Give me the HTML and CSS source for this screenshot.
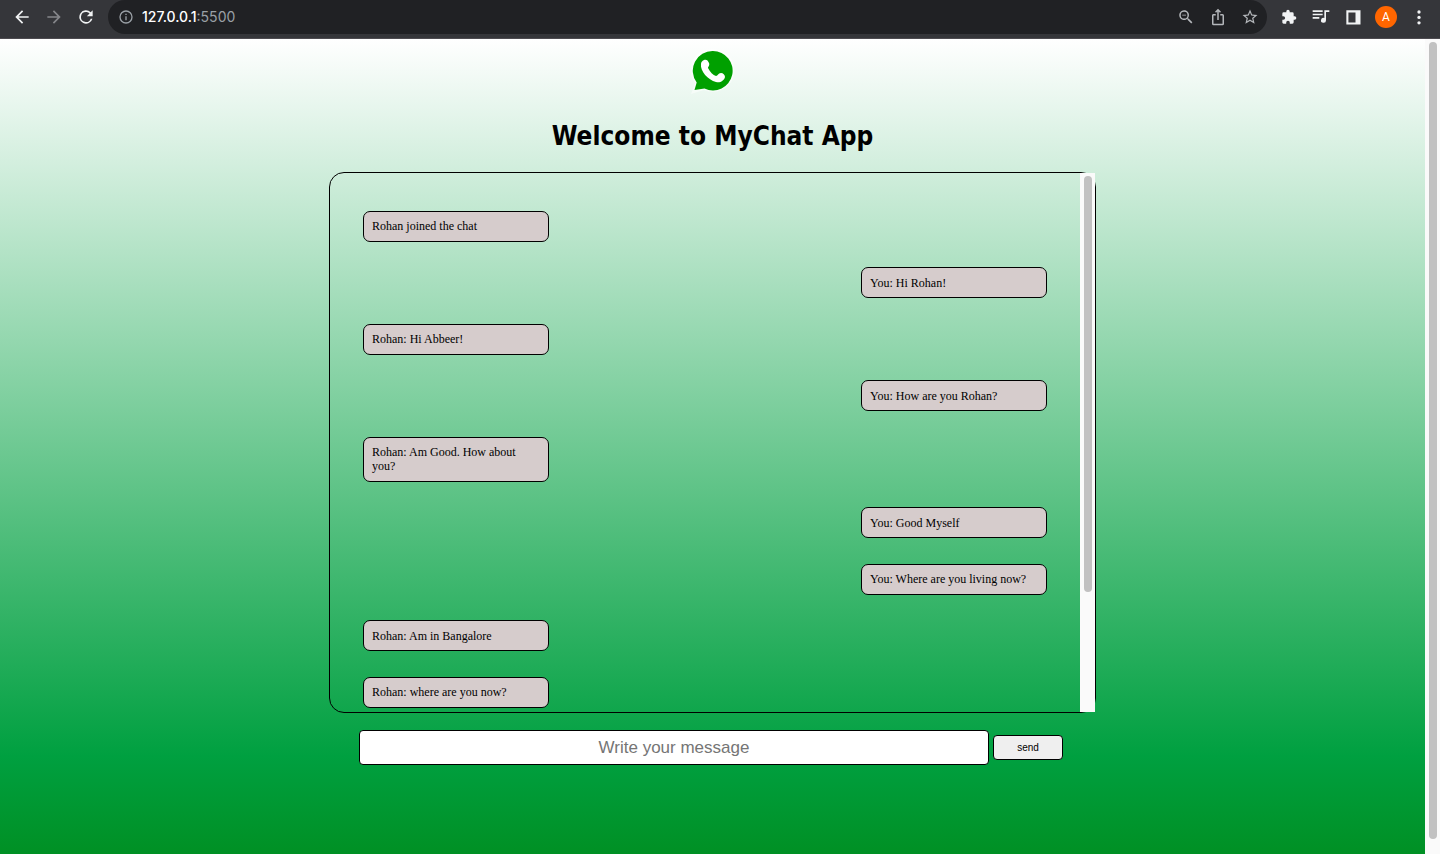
FILE: index.html
```html
<!DOCTYPE html>
<html lang="en">
<head>
<meta charset="utf-8">
<title>MyChat App</title>
<link rel="stylesheet" href="styles.css">
</head>
<body>
<header class="toolbar">
  <button class="tool" aria-label="Back"><svg viewBox="0 0 24 24"><path d="M20 11H7.8l5.6-5.6L12 4l-8 8 8 8 1.4-1.4L7.8 13H20z"/></svg></button>
  <button class="tool tool-off" aria-label="Forward"><svg viewBox="0 0 24 24"><path d="M4 13h12.2l-5.6 5.6L12 20l8-8-8-8-1.4 1.4 5.6 5.6H4z"/></svg></button>
  <button class="tool" aria-label="Reload"><svg viewBox="0 0 24 24"><path d="M17.65 6.35A8 8 0 1 0 19.73 14h-2.08A6 6 0 1 1 12 6c1.66 0 3.14.69 4.22 1.78L13 11h7V4z"/></svg></button>
  <div class="omnibox">
    <svg class="info" viewBox="0 0 24 24"><path d="M11 7h2v2h-2zm0 4h2v6h-2zm1-9a10 10 0 1 0 0 20 10 10 0 0 0 0-20m0 18a8 8 0 1 1 0-16 8 8 0 0 1 0 16"/></svg>
    <p class="address"><span class="host">127.0.0.1</span>:5500</p>
    <button class="mini" aria-label="Zoom"><svg viewBox="0 0 24 24"><path d="M15.5 14h-.8l-.3-.3A6.500 6.500 0 1 0 13.700 14.400l.3.3v.8l5 5 1.500-1.500zm-6 0a4.500 4.500 0 1 1 0-9 4.500 4.500 0 0 1 0 9M7 9h5v1H7z"/></svg></button>
    <button class="mini" aria-label="Share"><svg viewBox="0 0 24 24"><path d="M16 5l-1.400 1.400-1.600-1.600V16h-2V4.800L9.400 6.400 8 5l4-4zm4 5v11a2 2 0 0 1-2 2H6a2 2 0 0 1-2-2V10c0-1.100.9-2 2-2h3v2H6v11h12V10h-3V8h3a2 2 0 0 1 2 2"/></svg></button>
    <button class="mini" aria-label="Bookmark"><svg viewBox="0 0 24 24"><path d="M22 9.240l-7.190-.62L12 2 9.190 8.630 2 9.240l5.460 4.730L5.820 21 12 17.270 18.180 21l-1.630-7.030zM12 15.400l-3.760 2.270 1-4.280-3.320-2.880 4.380-.38L12 6.100l1.710 4.040 4.380.38-3.320 2.880 1 4.280z"/></svg></button>
  </div>
  <button class="tool tool-sm" aria-label="Extensions"><svg viewBox="0 0 24 24"><path d="M20.500 11H19V7a2 2 0 0 0-2-2h-4V3.500a2.500 2.500 0 0 0-5 0V5H4a2 2 0 0 0-2 2v3.800h1.500a2.700 2.700 0 0 1 0 5.400H2V20c0 1.100.9 2 2 2h3.800v-1.500a2.700 2.700 0 0 1 5.400 0V22H17a2 2 0 0 0 2-2v-4h1.500a2.500 2.500 0 0 0 0-5"/></svg></button>
  <button class="tool" aria-label="Media"><svg viewBox="0 0 24 24"><path d="M2 4h12v2H2zm0 4h12v2H2zm0 4h8v2H2zM16 4h6v2h-4v10a3 3 0 1 1-2-2.800z"/></svg></button>
  <button class="tool" aria-label="Side panel"><svg viewBox="0 0 24 24"><path fill-rule="evenodd" d="M4 4h17v17H4zm2.500 2.500v12H15v-12z"/></svg></button>
  <button class="avatar" aria-label="Profile">A</button>
  <button class="tool" aria-label="Menu"><svg viewBox="0 0 24 24"><circle cx="12" cy="6" r="2"/><circle cx="12" cy="12.500" r="2"/><circle cx="12" cy="19" r="2"/></svg></button>
</header>
<div class="view">
  <main class="page">
    <svg class="logo" viewBox="0 0 66 56" role="img" aria-label="Logo"><path class="halo" d="M33 7a21 21 0 0 1 0 43q-5 0-9-2l-13 4 4-11A21 21 0 0 1 33 7z"/><path class="bubble" d="M33 9a19.700 19.700 0 1 1-8.500 37.500l-10 1.500 2.200-7.500A19.700 19.700 0 0 1 33 9z"/><path class="phone" d="M24 18c2-1 4 0 5 3 1 2-1 4-1 5 2 4 5 7 8 8 2 0 2-3 5-3 2 0 4 2 4 4-1 4-5 6-9 5C28 38 20 29 21 22c0-2 1-3 3-4z"/></svg>
    <h1 class="title">Welcome to MyChat App</h1>
    <section class="chat">
      <div class="messages">
        <p class="message">Rohan joined the chat</p>
        <p class="message own">You: Hi Rohan!</p>
        <p class="message">Rohan: Hi Abbeer!</p>
        <p class="message own">You: How are you Rohan?</p>
        <p class="message">Rohan: Am Good. How about you?</p>
        <p class="message own">You: Good Myself</p>
        <p class="message own">You: Where are you living now?</p>
        <p class="message">Rohan: Am in Bangalore</p>
        <p class="message">Rohan: where are you now?</p>
      </div>
      <div class="rail"><div class="thumb chat-thumb"></div></div>
    </section>
    <form class="composer">
      <input class="field" type="text" aria-label="Message" placeholder="Write your message">
      <button class="send" type="button">send</button>
    </form>
  </main>
  <div class="rail"><div class="thumb page-thumb"></div></div>
</div>
</body>
</html>
```
FILE: styles.css
```css
* { box-sizing: border-box; }
body { margin: 0; min-height: 100vh; display: flex; flex-direction: column; font-family: "Liberation Serif", serif; color: #000; }
button { border: 0; padding: 0; background: none; }
svg { display: block; }

.toolbar { display: flex; align-items: center; gap: 12px; height: 39px; padding: 0 11px 5px 12px; background: #35363a; border-bottom: 1px solid #4d4b50; }
.tool { flex: none; width: 20px; height: 20px; fill: #f1f3f4; }
.tool-off { fill: #85868a; }
.tool-sm { padding: 2px; }
.omnibox { flex: 1; display: flex; align-items: center; gap: 14px; height: 34px; padding: 0 8px 0 10px; border-radius: 17px; background: #202124; }
.info { width: 16px; height: 16px; fill: #9aa0a6; }
.address { flex: 1; margin: 0 0 0 -6px; font: 14px/20px Inter, sans-serif; color: #9aa0a6; }
.host { color: #fff; font-weight: 500; }
.mini { width: 18px; height: 18px; fill: #b4b7bb; }
.avatar { width: 22px; height: 22px; border-radius: 50%; background: #ff6600; color: #fff; font: 12px/22px Roboto, sans-serif; }

.view { flex: 1; display: flex; }
.page { flex: 1; display: flex; flex-direction: column; align-items: center; padding: 3px 16px 24px; background: linear-gradient(#fff, #00a040 88%, #009024); }
.logo { width: 66px; height: 56px; }
.halo { fill: #fff; opacity: .5; }
.bubble { fill: #00a000; }
.phone { fill: #fff; }
.title { margin: 20px 0 18px; font: bold 26px/36px "DejaVu Sans Condensed", sans-serif; }
.chat { display: flex; width: 100%; max-width: 767px; height: 541px; border: 1px solid #000; border-radius: 15px; }
.messages { flex: 1; display: flex; flex-direction: column; align-items: flex-start; padding: 12px 33px 0; overflow: hidden; }
.message { flex: none; width: 186px; margin: 26px 0 0; padding: 7px 8px 8px; border: 1px solid #000; border-radius: 7px; background: #d6cccc; font-size: 12px; line-height: 14px; }
.message:nth-child(even) { margin-top: 25px; padding: 8px 8px 7px; }
.own { align-self: flex-end; }
.rail { flex: none; width: 15px; padding: 3px; background: #fafafa; }
.thumb { width: 8px; margin-left: 1px; border-radius: 4px; background: #c1c1c1; }
.chat-thumb { height: 78%; }
.page-thumb { height: calc(100% - 12px); }
.composer { display: flex; align-items: center; gap: 4px; width: 100%; max-width: 707px; margin-top: 17px; padding-right: 3px; }
.field { flex: 1; height: 35px; border: 1px solid #000; border-radius: 4px; background: #fff; font: 17px "Liberation Sans", sans-serif; text-align: center; }
.field::placeholder { color: #757575; }
.send { width: 70px; height: 25px; border: 1px solid #000; border-radius: 4px; background: #efefef; color: #000; font: 10px "Liberation Sans", sans-serif; }
```
